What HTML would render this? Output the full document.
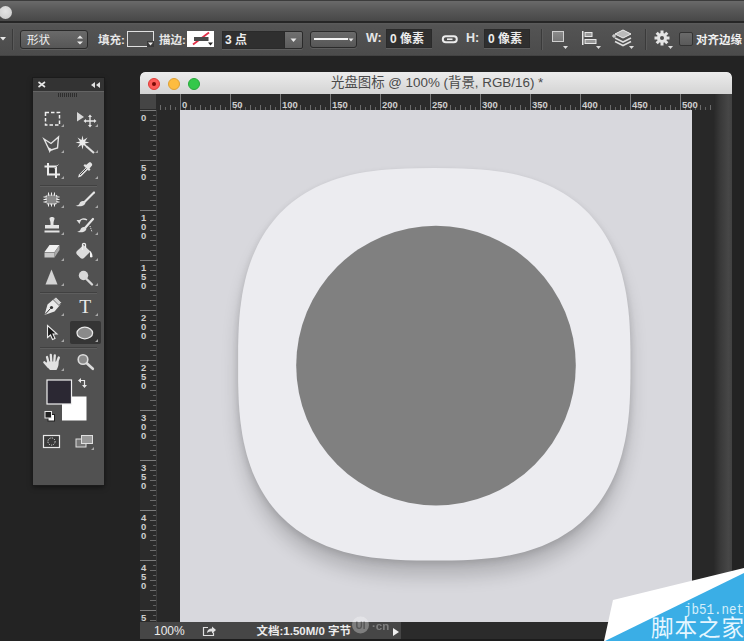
<!DOCTYPE html>
<html><head><meta charset="utf-8"><title>光盘图标</title>
<style>
html,body{margin:0;padding:0;}
body{width:744px;height:641px;overflow:hidden;background:#232323;position:relative;font-family:"Liberation Sans","Noto Sans CJK SC",sans-serif;}
.abs{position:absolute;}
#titlebar{left:0;top:0;width:744px;height:23px;background:linear-gradient(#3c3c3c 0,#3c3c3c 1px,#6a6a6a 1px,#5a5a5a 9px,#484848 21px,#262626 21px);}
#tb-dot{left:-1px;top:6px;width:13px;height:13px;border-radius:50%;background:radial-gradient(circle at 50% 40%,#e4e4e4,#c8c8c8);}
#optbar{left:0;top:23px;width:744px;height:33px;background:linear-gradient(#5c5c5c 0,#545454 2px,#4b4b4b 32px,#3a3a3a 33px);}
.lbl{color:#e6e6e6;font-size:11.5px;font-weight:bold;line-height:14px;white-space:nowrap;}
.inp{background:#2f2f2f;border:1px solid #2a2a2a;box-shadow:0 1px 0 #5e5e5e;box-sizing:border-box;color:#ececec;font-size:12px;font-weight:bold;line-height:19px;white-space:nowrap;}
.btn{background:linear-gradient(#6a6a6a,#565656);border:1px solid #2a2a2a;border-radius:3px;box-shadow:0 1px 0 #5e5e5e;box-sizing:border-box;}
.vsep{width:1px;background:#3a3a3a;box-shadow:1px 0 0 #5a5a5a;}
#panel{left:33px;top:78px;width:71px;height:407px;background:#515151;box-shadow:0 0 0 1px #1b1b1b,0 2px 5px rgba(0,0,0,.5);}
#panel-h{left:0;top:0;width:71px;height:13px;background:#333;border-bottom:1px solid #646464;box-sizing:content-box;}
.hsep{left:7px;width:57px;height:1px;background:#434343;box-shadow:0 1px 0 #5d5d5d;}
#win{left:140px;top:72px;width:592px;height:569px;background:#282828;border-radius:5px 5px 0 0;overflow:hidden;}
#wtitle{left:0;top:0;width:592px;height:22px;background:linear-gradient(#ececec,#d4d4d4);border-radius:5px 5px 0 0;}
#wtitle span{position:absolute;left:191px;top:3px;font-size:13.4px;line-height:16px;color:#4a4a4a;white-space:nowrap;}
.tl{width:12px;height:12px;border-radius:50%;top:6px;box-sizing:border-box;}
</style></head><body>
<!-- app title bar -->
<div id="titlebar" class="abs"></div>
<div id="tb-dot" class="abs"></div>
<!-- options bar -->
<div id="optbar" class="abs"></div>
<div class="abs vsep" style="left:12px;top:29px;height:21px"></div>
<svg class="abs" style="left:0;top:36px" width="8" height="6"><path d="M0 1h6l-3 3.5z" fill="#e8e8e8"/></svg>
<div class="abs btn" style="left:20px;top:30px;width:68px;height:19px"></div>
<div class="abs lbl" style="left:27px;top:32.5px;font-weight:normal;color:#f0f0f0">形状</div>
<svg class="abs" style="left:76px;top:34px" width="8" height="12"><path d="M1 4.5l3-3 3 3zM1 7.5l3 3 3-3z" fill="#e8e8e8"/></svg>
<div class="abs lbl" style="left:98px;top:33px">填充:</div>
<div class="abs" style="left:127px;top:31px;width:27px;height:16px;box-sizing:border-box;border:1px solid #e0e0e0;background:#555"></div>
<svg class="abs" style="left:147px;top:41px" width="7" height="6"><rect width="7" height="6" fill="#3a3a3a"/><path d="M1 1.500h5l-2.500 3z" fill="#eee"/></svg>
<div class="abs lbl" style="left:159px;top:33px">描边:</div>
<div class="abs" style="left:187px;top:31px;width:27px;height:16px;box-sizing:border-box;background:#fff;overflow:hidden"><svg width="27" height="16"><path d="M6 13.500L22 1.500" stroke="#e03048" stroke-width="1.800"/><rect x="7" y="6" width="14.500" height="4" fill="#4a4a4a"/><path d="M21 11.500h5l-2.500 3z" fill="#222"/></svg></div>
<div class="abs inp" style="left:222px;top:31px;width:63px;height:18px;line-height:17px;padding-left:2px">3 点</div>
<div class="abs btn" style="left:284px;top:31px;width:19px;height:18px;border-radius:0 2px 2px 0;background:linear-gradient(#707070,#5c5c5c)"></div>
<svg class="abs" style="left:290px;top:38px" width="8" height="6"><path d="M0.5 0.5h6l-3 3.5z" fill="#e8e8e8"/></svg>
<div class="abs btn" style="left:310px;top:31px;width:47px;height:17px"></div>
<div class="abs" style="left:314px;top:38px;width:34px;height:2px;background:#f4f4f4"></div>
<svg class="abs" style="left:348px;top:38px" width="8" height="6"><path d="M0.5 0.5h5l-2.5 3z" fill="#e8e8e8"/></svg>
<div class="abs lbl" style="left:366px;top:31px;font-size:12.5px">W:</div>
<div class="abs inp" style="left:386px;top:29px;width:46px;height:19px;padding-left:3px">0 像素</div>
<svg class="abs" style="left:441px;top:34px" width="18" height="11"><rect x="1.800" y="2.200" width="14" height="6" rx="3" fill="none" stroke="#ececec" stroke-width="2"/><rect x="6" y="4.400" width="5.500" height="1.600" fill="#ececec"/></svg>
<div class="abs lbl" style="left:466px;top:31px;font-size:12.5px">H:</div>
<div class="abs inp" style="left:484px;top:29px;width:46px;height:19px;padding-left:3px">0 像素</div>
<div class="abs vsep" style="left:541px;top:29px;height:21px"></div>
<div class="abs" style="left:552px;top:31px;width:12px;height:11px;background:linear-gradient(#8a8a8a,#777);border:1px solid #cfcfcf;box-sizing:border-box"></div>
<svg class="abs" style="left:563px;top:46px" width="5" height="4"><path d="M0 0h5l-2.5 3z" fill="#ddd"/></svg>
<svg class="abs" style="left:582px;top:31px" width="17" height="15"><rect x="0" y="0" width="1.5" height="14" fill="#e8e8e8"/><rect x="3" y="1.5" width="7" height="4" fill="#999" stroke="#e8e8e8"/><rect x="3" y="8.5" width="11" height="4" fill="#999" stroke="#e8e8e8"/></svg>
<svg class="abs" style="left:596px;top:46px" width="5" height="4"><path d="M0 0h5l-2.5 3z" fill="#ddd"/></svg>
<svg class="abs" style="left:612px;top:29px" width="22" height="18"><path d="M11 1l8 4-8 4-8-4z" fill="#bbb" stroke="#eee" stroke-width="1"/><path d="M3 9l8 4 8-4" fill="none" stroke="#ddd" stroke-width="1.6"/><path d="M3 12.5l8 4 8-4" fill="none" stroke="#ddd" stroke-width="1.6"/><path d="M0 7h4M2 5v4" stroke="#eee" stroke-width="1"/></svg>
<svg class="abs" style="left:629px;top:46px" width="5" height="4"><path d="M0 0h5l-2.5 3z" fill="#ddd"/></svg>
<div class="abs vsep" style="left:645px;top:29px;height:21px"></div>
<svg class="abs" style="left:654px;top:30px" width="16" height="16" viewBox="-8 -8 16 16"><g fill="#e4e4e4"><circle r="5"/><g id="t"><rect x="-1.5" y="-7.5" width="3" height="15"/></g><use href="#t" transform="rotate(45)"/><use href="#t" transform="rotate(90)"/><use href="#t" transform="rotate(135)"/></g><circle r="2" fill="#4f4f4f"/></svg>
<svg class="abs" style="left:668px;top:46px" width="5" height="4"><path d="M0 0h5l-2.5 3z" fill="#ddd"/></svg>
<div class="abs" style="left:679px;top:32px;width:14px;height:14px;box-sizing:border-box;background:linear-gradient(#6a6a6a,#5a5a5a);border:1px solid #333;border-radius:2px"></div>
<div class="abs lbl" style="left:696px;top:32.5px;color:#f0f0f0">对齐边缘</div>

<!-- tool panel -->
<div id="panel" class="abs">
<div id="panel-h" class="abs"></div>
</div>

<!-- document window -->
<div id="win" class="abs">
<div id="wtitle" class="abs"><span>光盘图标 @ 100% (背景, RGB/16) *</span></div>
<div class="abs tl" style="left:8px;background:#fc5b57;border:1px solid #de3d38"></div>
<div class="abs" style="left:12px;top:10px;width:4px;height:4px;border-radius:50%;background:#7a0a05"></div>
<div class="abs tl" style="left:28px;background:#fdbc40;border:1px solid #dea034"></div>
<div class="abs tl" style="left:48px;background:#34c84a;border:1px solid #27a83a"></div>
</div>
<svg class="abs" style="left:0;top:0" width="744" height="641" font-family="'Liberation Sans',sans-serif">
<defs>
<clipPath id="cv"><rect x="180" y="110" width="512" height="512"/></clipPath>
<filter id="sh" x="-20%" y="-20%" width="140%" height="150%"><feGaussianBlur stdDeviation="9"/></filter><filter id="sh2" x="-10%" y="-10%" width="120%" height="120%"><feGaussianBlur stdDeviation="3.500"/></filter>
</defs>
<!-- panel header icons -->
<g stroke="#e6e6e6" stroke-width="1.6" fill="none"><path d="M38.500 82l6.500 5M45 82l-6.500 5"/></g>
<path d="M95 82v6l-4-3zM100 82v6l-4-3z" fill="#e0e0e0"/>
<!-- grip -->
<g fill="#2e2e2e"><rect x="58" y="93" width="1" height="4"/><rect x="60" y="93" width="1" height="4"/><rect x="62" y="93" width="1" height="4"/><rect x="64" y="93" width="1" height="4"/><rect x="66" y="93" width="1" height="4"/><rect x="68" y="93" width="1" height="4"/><rect x="70" y="93" width="1" height="4"/><rect x="72" y="93" width="1" height="4"/><rect x="74" y="93" width="1" height="4"/><rect x="76" y="93" width="1" height="4"/></g>
<!-- separators -->
<g><rect x="40" y="185" width="57" height="1" fill="#414141"/><rect x="40" y="186" width="57" height="1" fill="#5e5e5e"/>
<rect x="40" y="292" width="57" height="1" fill="#414141"/><rect x="40" y="293" width="57" height="1" fill="#5e5e5e"/>
<rect x="40" y="347" width="57" height="1" fill="#414141"/><rect x="40" y="348" width="57" height="1" fill="#5e5e5e"/></g>
<!-- selected cell -->
<rect x="70" y="321" width="31" height="23" rx="2" fill="#353535"/>
<!-- corner triangles -->
<g fill="#a8a8a8">
<path d="M61 127h3v-3zM95 127h3v-3zM61 153h3v-3zM95 153h3v-3zM61 179h3v-3zM95 179h3v-3zM61 208h3v-3zM95 208h3v-3zM61 235h3v-3zM95 235h3v-3zM61 261h3v-3zM95 261h3v-3zM61 286h3v-3zM95 286h3v-3zM61 316h3v-3zM95 316h3v-3zM61 342h3v-3zM95 342h3v-3zM61 371h3v-3zM91 450h3v-3z"/></g>
<!-- marquee -->
<rect x="45.500" y="112.500" width="14" height="12.500" fill="none" stroke="#f0f0f0" stroke-width="1.500" stroke-dasharray="3.500 2"/>
<!-- move -->
<path d="M77 112v9.500l7-4.500z" fill="#d8d8d8"/><path d="M90 116v10M85 121h10" stroke="#e8e8e8" stroke-width="1.300"/><path d="M90 114.500l2 2.500h-4zM90 127.500l2-2.500h-4zM83.500 121l2.500-2v4zM96.500 121l-2.500-2v4z" fill="#e8e8e8"/>
<!-- poly lasso -->
<path d="M44 139l7 4.500 7.500-6.500-1 11-8 2.500z" fill="none" stroke="#e4e4e4" stroke-width="1.400"/><path d="M48 147l1.500 6 1.500-2.500 2.500-.5z" fill="#e4e4e4"/>
<!-- magic wand -->
<path d="M86 146l8 7" stroke="#e0e0e0" stroke-width="2.200"/><path d="M82.500 135.500l1 4.500 4-2.500-2.500 4 4.500 1-4.500 1 2.500 4-4-2.500-1 4.500-1-4.500-4 2.500 2.500-4-4.500-1 4.500-1-2.500-4 4 2.500z" fill="#ececec"/>
<!-- crop -->
<path d="M48 163v11.500h12M44.500 166.500h11.500v11.500" fill="none" stroke="#ececec" stroke-width="2"/><path d="M50 173l8.500-8.500" stroke="#bbb" stroke-width="1"/><rect x="49.500" y="168" width="5" height="5" fill="#3a3a3a"/>
<!-- eyedropper -->
<path d="M78 177.500l1-3 8-8 2 2-8 8z" fill="#e4e4e4"/><path d="M86 165l3-2.500c1.500-1 4 1.500 3 3l-2.500 3 1 1-1.500 1.500-5.500-5.500 1.500-1.500z" fill="#e4e4e4"/><path d="M80 175l6.500-6.500" stroke="#444" stroke-width="1"/>
<!-- healing brush -->
<rect x="46" y="195" width="11" height="9" rx="2" fill="#8a8a8a" stroke="#eee" stroke-width="1.200" stroke-dasharray="1.500 1.200"/><path d="M48.500 192.500v3M51.500 192.500v3M54.500 192.500v3M48.500 203.500v3M51.500 203.500v3M54.500 203.500v3M43.500 197h3M43.500 199.500h3M43.500 202h3M56.500 197h3M56.500 199.500h3M56.500 202h3" stroke="#eee" stroke-width="1"/>
<!-- brush -->
<path d="M94 192.500l-10 10" stroke="#e6e6e6" stroke-width="2.200" stroke-linecap="round"/><path d="M84.500 201.500c-2-1-4.500 0-5 2-.500 1.500-2 2-4 2 3 1.500 8 1 9.500-1.500.700-1.200.300-2-.500-2.500z" fill="#e0e0e0"/>
<!-- stamp -->
<path d="M49.500 218.500c0-2 5-2 5 0 0 1.500-1 2.500-1 4.500v2h5.500v3.500h-14v-3.500h5.500v-2c0-2-1-3-1-4.500z" fill="#e4e4e4"/><rect x="44.500" y="230.500" width="15" height="2" fill="#e4e4e4"/>
<!-- history brush -->
<path d="M93 219l-8 9" stroke="#e6e6e6" stroke-width="2.200" stroke-linecap="round"/><path d="M85.500 227.500c-2-1-4.500 0-5 2-.500 1.500-2 2-3.500 2 3 1.500 7.500 1 9-1.500.700-1.200.300-2-.500-2.500z" fill="#e0e0e0"/><path d="M79 222c1-3 5-4 8-2" fill="none" stroke="#e0e0e0" stroke-width="1.400"/><path d="M76.500 220l4.500 0-1.500 4z" fill="#e0e0e0"/><path d="M90 226l2 6" stroke="#eee" stroke-width="1" stroke-dasharray="1 1"/>
<!-- eraser -->
<path d="M44.500 252l5-7h10l-5 7z" fill="#f0f0f0"/><path d="M44.500 252.500h10v5h-10z" fill="#c8c8c8"/><path d="M54.500 252.500l5-7.500v5l-5 7.500z" fill="#a8a8a8"/>
<!-- bucket -->
<path d="M77 251l6.500-6 7 6.500-6.500 6.500c-1 1-2.500 1-3.500 0l-3.500-3.500c-1-1-1-2.500 0-3.500z" fill="#dcdcdc"/><path d="M82.500 250v-5.500c0-1.500 3-1.500 3 0v4" fill="none" stroke="#eee" stroke-width="1.300"/><path d="M90 251c1.500 1 2.500 3 2.500 6-1 .500-2 .500-2.500 0z" fill="#f4f4f4"/>
<!-- sharpen -->
<path d="M51.500 269.500l6 15h-12z" fill="#d4d4d4"/>
<!-- dodge -->
<circle cx="83.500" cy="275.500" r="4.700" fill="#d8d8d8"/><path d="M86.500 279l5.500 5.500" stroke="#d8d8d8" stroke-width="2.400" stroke-linecap="round"/>
<!-- pen -->
<path d="M44.500 315l3-10.500 7-6 6 6-6 7z" fill="#e8e8e8"/><path d="M53 299.500l3-2.500 5.500 5.500-2.500 3z" fill="#cfcfcf" stroke="#555" stroke-width=".800"/><circle cx="51.500" cy="307.500" r="1.600" fill="#333"/><path d="M45 314.500l5.500-6" stroke="#333" stroke-width="1"/>
<!-- T -->
<text x="85.200" y="313" font-family="'Liberation Serif',serif" font-size="19.500" fill="#e8e8e8" text-anchor="middle">T</text>
<!-- path select arrow -->
<path d="M47.500 325.500v12l3-2.500 2 4.500 2.500-1-2-4.500h4z" fill="#1a1a1a" stroke="#e8e8e8" stroke-width="1.100"/>
<!-- ellipse tool -->
<ellipse cx="84.800" cy="333" rx="7.800" ry="5.800" fill="#8a8a8a" stroke="#e8e8e8" stroke-width="1.300"/>
<!-- hand -->
<g stroke="#e2e2e2" stroke-width="2.300" stroke-linecap="round" fill="none"><path d="M48.500 362.500L47 357M51.300 361.500L50.800 355M54.300 361.500L54.800 355.300M57 362.500L58.800 357.500M48.500 367L44.300 362.300"/></g><path d="M47 361.500h11.500c.500 3-.500 6-2 8.500h-6.500c-1.500-1.500-3-4-4.500-6z" fill="#e2e2e2"/>
<!-- zoom -->
<circle cx="83" cy="359.500" r="4.800" fill="#8a8a8a" stroke="#dcdcdc" stroke-width="1.600"/><path d="M86.800 363.300l6 5.500" stroke="#dcdcdc" stroke-width="2.600" stroke-linecap="round"/>
<!-- colour swatches -->
<rect x="62" y="396.500" width="24.500" height="24" fill="#fff"/>
<rect x="47" y="380" width="24.500" height="24" fill="#2b2833" stroke="#f0f0f0" stroke-width="1.200"/>
<path d="M80 380.500h4.500v5" fill="none" stroke="#e8e8e8" stroke-width="1.200"/><path d="M78 380.500l3-2.500v5zM84.500 388l-2.500-3h5z" fill="#e8e8e8"/>
<rect x="48" y="414.500" width="6.500" height="6.500" fill="#fff" stroke="#222" stroke-width="1"/><rect x="45" y="411.500" width="6.500" height="6.500" fill="#222" stroke="#e8e8e8" stroke-width="1"/>
<!-- quick mask -->
<rect x="43.500" y="435.500" width="16" height="12" fill="#3a3a3a" stroke="#e8e8e8" stroke-width="1.200"/><circle cx="51.500" cy="441.500" r="3.600" fill="none" stroke="#e8e8e8" stroke-width="1" stroke-dasharray="1.200 1.200"/>
<!-- screen mode -->
<rect x="76" y="439" width="10" height="8" fill="#777" stroke="#e0e0e0" stroke-width="1"/><rect x="81.500" y="435.500" width="11" height="8" fill="#999" stroke="#e0e0e0" stroke-width="1"/>
<!-- rulers -->
<rect x="140" y="94" width="592" height="16" fill="#2b2b2b"/>
<rect x="140" y="110" width="16" height="512" fill="#2b2b2b"/>
<rect x="156" y="110" width="1" height="512" fill="#3c3c3c"/>
<rect x="140" y="94" width="16" height="15" fill="#454545"/>
<rect x="160" y="105" width="1" height="5" fill="#6c6c6c"/><rect x="165" y="107" width="1" height="3" fill="#626262"/><rect x="170" y="105" width="1" height="5" fill="#6c6c6c"/><rect x="175" y="107" width="1" height="3" fill="#626262"/><rect x="180" y="94" width="1" height="16" fill="#7c7c7c"/><rect x="185" y="107" width="1" height="3" fill="#626262"/><rect x="190" y="105" width="1" height="5" fill="#6c6c6c"/><rect x="195" y="107" width="1" height="3" fill="#626262"/><rect x="200" y="105" width="1" height="5" fill="#6c6c6c"/><rect x="205" y="107" width="1" height="3" fill="#626262"/><rect x="210" y="105" width="1" height="5" fill="#6c6c6c"/><rect x="215" y="107" width="1" height="3" fill="#626262"/><rect x="220" y="105" width="1" height="5" fill="#6c6c6c"/><rect x="225" y="107" width="1" height="3" fill="#626262"/><rect x="230" y="94" width="1" height="16" fill="#7c7c7c"/><rect x="235" y="107" width="1" height="3" fill="#626262"/><rect x="240" y="105" width="1" height="5" fill="#6c6c6c"/><rect x="245" y="107" width="1" height="3" fill="#626262"/><rect x="250" y="105" width="1" height="5" fill="#6c6c6c"/><rect x="255" y="107" width="1" height="3" fill="#626262"/><rect x="260" y="105" width="1" height="5" fill="#6c6c6c"/><rect x="265" y="107" width="1" height="3" fill="#626262"/><rect x="270" y="105" width="1" height="5" fill="#6c6c6c"/><rect x="275" y="107" width="1" height="3" fill="#626262"/><rect x="280" y="94" width="1" height="16" fill="#7c7c7c"/><rect x="285" y="107" width="1" height="3" fill="#626262"/><rect x="290" y="105" width="1" height="5" fill="#6c6c6c"/><rect x="295" y="107" width="1" height="3" fill="#626262"/><rect x="300" y="105" width="1" height="5" fill="#6c6c6c"/><rect x="305" y="107" width="1" height="3" fill="#626262"/><rect x="310" y="105" width="1" height="5" fill="#6c6c6c"/><rect x="315" y="107" width="1" height="3" fill="#626262"/><rect x="320" y="105" width="1" height="5" fill="#6c6c6c"/><rect x="325" y="107" width="1" height="3" fill="#626262"/><rect x="330" y="94" width="1" height="16" fill="#7c7c7c"/><rect x="335" y="107" width="1" height="3" fill="#626262"/><rect x="340" y="105" width="1" height="5" fill="#6c6c6c"/><rect x="345" y="107" width="1" height="3" fill="#626262"/><rect x="350" y="105" width="1" height="5" fill="#6c6c6c"/><rect x="355" y="107" width="1" height="3" fill="#626262"/><rect x="360" y="105" width="1" height="5" fill="#6c6c6c"/><rect x="365" y="107" width="1" height="3" fill="#626262"/><rect x="370" y="105" width="1" height="5" fill="#6c6c6c"/><rect x="375" y="107" width="1" height="3" fill="#626262"/><rect x="380" y="94" width="1" height="16" fill="#7c7c7c"/><rect x="385" y="107" width="1" height="3" fill="#626262"/><rect x="390" y="105" width="1" height="5" fill="#6c6c6c"/><rect x="395" y="107" width="1" height="3" fill="#626262"/><rect x="400" y="105" width="1" height="5" fill="#6c6c6c"/><rect x="405" y="107" width="1" height="3" fill="#626262"/><rect x="410" y="105" width="1" height="5" fill="#6c6c6c"/><rect x="415" y="107" width="1" height="3" fill="#626262"/><rect x="420" y="105" width="1" height="5" fill="#6c6c6c"/><rect x="425" y="107" width="1" height="3" fill="#626262"/><rect x="430" y="94" width="1" height="16" fill="#7c7c7c"/><rect x="435" y="107" width="1" height="3" fill="#626262"/><rect x="440" y="105" width="1" height="5" fill="#6c6c6c"/><rect x="445" y="107" width="1" height="3" fill="#626262"/><rect x="450" y="105" width="1" height="5" fill="#6c6c6c"/><rect x="455" y="107" width="1" height="3" fill="#626262"/><rect x="460" y="105" width="1" height="5" fill="#6c6c6c"/><rect x="465" y="107" width="1" height="3" fill="#626262"/><rect x="470" y="105" width="1" height="5" fill="#6c6c6c"/><rect x="475" y="107" width="1" height="3" fill="#626262"/><rect x="480" y="94" width="1" height="16" fill="#7c7c7c"/><rect x="485" y="107" width="1" height="3" fill="#626262"/><rect x="490" y="105" width="1" height="5" fill="#6c6c6c"/><rect x="495" y="107" width="1" height="3" fill="#626262"/><rect x="500" y="105" width="1" height="5" fill="#6c6c6c"/><rect x="505" y="107" width="1" height="3" fill="#626262"/><rect x="510" y="105" width="1" height="5" fill="#6c6c6c"/><rect x="515" y="107" width="1" height="3" fill="#626262"/><rect x="520" y="105" width="1" height="5" fill="#6c6c6c"/><rect x="525" y="107" width="1" height="3" fill="#626262"/><rect x="530" y="94" width="1" height="16" fill="#7c7c7c"/><rect x="535" y="107" width="1" height="3" fill="#626262"/><rect x="540" y="105" width="1" height="5" fill="#6c6c6c"/><rect x="545" y="107" width="1" height="3" fill="#626262"/><rect x="550" y="105" width="1" height="5" fill="#6c6c6c"/><rect x="555" y="107" width="1" height="3" fill="#626262"/><rect x="560" y="105" width="1" height="5" fill="#6c6c6c"/><rect x="565" y="107" width="1" height="3" fill="#626262"/><rect x="570" y="105" width="1" height="5" fill="#6c6c6c"/><rect x="575" y="107" width="1" height="3" fill="#626262"/><rect x="580" y="94" width="1" height="16" fill="#7c7c7c"/><rect x="585" y="107" width="1" height="3" fill="#626262"/><rect x="590" y="105" width="1" height="5" fill="#6c6c6c"/><rect x="595" y="107" width="1" height="3" fill="#626262"/><rect x="600" y="105" width="1" height="5" fill="#6c6c6c"/><rect x="605" y="107" width="1" height="3" fill="#626262"/><rect x="610" y="105" width="1" height="5" fill="#6c6c6c"/><rect x="615" y="107" width="1" height="3" fill="#626262"/><rect x="620" y="105" width="1" height="5" fill="#6c6c6c"/><rect x="625" y="107" width="1" height="3" fill="#626262"/><rect x="630" y="94" width="1" height="16" fill="#7c7c7c"/><rect x="635" y="107" width="1" height="3" fill="#626262"/><rect x="640" y="105" width="1" height="5" fill="#6c6c6c"/><rect x="645" y="107" width="1" height="3" fill="#626262"/><rect x="650" y="105" width="1" height="5" fill="#6c6c6c"/><rect x="655" y="107" width="1" height="3" fill="#626262"/><rect x="660" y="105" width="1" height="5" fill="#6c6c6c"/><rect x="665" y="107" width="1" height="3" fill="#626262"/><rect x="670" y="105" width="1" height="5" fill="#6c6c6c"/><rect x="675" y="107" width="1" height="3" fill="#626262"/><rect x="680" y="94" width="1" height="16" fill="#7c7c7c"/><rect x="685" y="107" width="1" height="3" fill="#626262"/><rect x="690" y="105" width="1" height="5" fill="#6c6c6c"/><rect x="695" y="107" width="1" height="3" fill="#626262"/><rect x="700" y="105" width="1" height="5" fill="#6c6c6c"/><rect x="705" y="107" width="1" height="3" fill="#626262"/><rect x="710" y="105" width="1" height="5" fill="#6c6c6c"/><rect x="715" y="107" width="1" height="3" fill="#626262"/>
<rect x="140" y="110" width="16" height="1" fill="#7c7c7c"/><rect x="153" y="115" width="3" height="1" fill="#626262"/><rect x="150" y="120" width="6" height="1" fill="#6c6c6c"/><rect x="153" y="125" width="3" height="1" fill="#626262"/><rect x="150" y="130" width="6" height="1" fill="#6c6c6c"/><rect x="153" y="135" width="3" height="1" fill="#626262"/><rect x="150" y="140" width="6" height="1" fill="#6c6c6c"/><rect x="153" y="145" width="3" height="1" fill="#626262"/><rect x="150" y="150" width="6" height="1" fill="#6c6c6c"/><rect x="153" y="155" width="3" height="1" fill="#626262"/><rect x="140" y="160" width="16" height="1" fill="#7c7c7c"/><rect x="153" y="165" width="3" height="1" fill="#626262"/><rect x="150" y="170" width="6" height="1" fill="#6c6c6c"/><rect x="153" y="175" width="3" height="1" fill="#626262"/><rect x="150" y="180" width="6" height="1" fill="#6c6c6c"/><rect x="153" y="185" width="3" height="1" fill="#626262"/><rect x="150" y="190" width="6" height="1" fill="#6c6c6c"/><rect x="153" y="195" width="3" height="1" fill="#626262"/><rect x="150" y="200" width="6" height="1" fill="#6c6c6c"/><rect x="153" y="205" width="3" height="1" fill="#626262"/><rect x="140" y="210" width="16" height="1" fill="#7c7c7c"/><rect x="153" y="215" width="3" height="1" fill="#626262"/><rect x="150" y="220" width="6" height="1" fill="#6c6c6c"/><rect x="153" y="225" width="3" height="1" fill="#626262"/><rect x="150" y="230" width="6" height="1" fill="#6c6c6c"/><rect x="153" y="235" width="3" height="1" fill="#626262"/><rect x="150" y="240" width="6" height="1" fill="#6c6c6c"/><rect x="153" y="245" width="3" height="1" fill="#626262"/><rect x="150" y="250" width="6" height="1" fill="#6c6c6c"/><rect x="153" y="255" width="3" height="1" fill="#626262"/><rect x="140" y="260" width="16" height="1" fill="#7c7c7c"/><rect x="153" y="265" width="3" height="1" fill="#626262"/><rect x="150" y="270" width="6" height="1" fill="#6c6c6c"/><rect x="153" y="275" width="3" height="1" fill="#626262"/><rect x="150" y="280" width="6" height="1" fill="#6c6c6c"/><rect x="153" y="285" width="3" height="1" fill="#626262"/><rect x="150" y="290" width="6" height="1" fill="#6c6c6c"/><rect x="153" y="295" width="3" height="1" fill="#626262"/><rect x="150" y="300" width="6" height="1" fill="#6c6c6c"/><rect x="153" y="305" width="3" height="1" fill="#626262"/><rect x="140" y="310" width="16" height="1" fill="#7c7c7c"/><rect x="153" y="315" width="3" height="1" fill="#626262"/><rect x="150" y="320" width="6" height="1" fill="#6c6c6c"/><rect x="153" y="325" width="3" height="1" fill="#626262"/><rect x="150" y="330" width="6" height="1" fill="#6c6c6c"/><rect x="153" y="335" width="3" height="1" fill="#626262"/><rect x="150" y="340" width="6" height="1" fill="#6c6c6c"/><rect x="153" y="345" width="3" height="1" fill="#626262"/><rect x="150" y="350" width="6" height="1" fill="#6c6c6c"/><rect x="153" y="355" width="3" height="1" fill="#626262"/><rect x="140" y="360" width="16" height="1" fill="#7c7c7c"/><rect x="153" y="365" width="3" height="1" fill="#626262"/><rect x="150" y="370" width="6" height="1" fill="#6c6c6c"/><rect x="153" y="375" width="3" height="1" fill="#626262"/><rect x="150" y="380" width="6" height="1" fill="#6c6c6c"/><rect x="153" y="385" width="3" height="1" fill="#626262"/><rect x="150" y="390" width="6" height="1" fill="#6c6c6c"/><rect x="153" y="395" width="3" height="1" fill="#626262"/><rect x="150" y="400" width="6" height="1" fill="#6c6c6c"/><rect x="153" y="405" width="3" height="1" fill="#626262"/><rect x="140" y="410" width="16" height="1" fill="#7c7c7c"/><rect x="153" y="415" width="3" height="1" fill="#626262"/><rect x="150" y="420" width="6" height="1" fill="#6c6c6c"/><rect x="153" y="425" width="3" height="1" fill="#626262"/><rect x="150" y="430" width="6" height="1" fill="#6c6c6c"/><rect x="153" y="435" width="3" height="1" fill="#626262"/><rect x="150" y="440" width="6" height="1" fill="#6c6c6c"/><rect x="153" y="445" width="3" height="1" fill="#626262"/><rect x="150" y="450" width="6" height="1" fill="#6c6c6c"/><rect x="153" y="455" width="3" height="1" fill="#626262"/><rect x="140" y="460" width="16" height="1" fill="#7c7c7c"/><rect x="153" y="465" width="3" height="1" fill="#626262"/><rect x="150" y="470" width="6" height="1" fill="#6c6c6c"/><rect x="153" y="475" width="3" height="1" fill="#626262"/><rect x="150" y="480" width="6" height="1" fill="#6c6c6c"/><rect x="153" y="485" width="3" height="1" fill="#626262"/><rect x="150" y="490" width="6" height="1" fill="#6c6c6c"/><rect x="153" y="495" width="3" height="1" fill="#626262"/><rect x="150" y="500" width="6" height="1" fill="#6c6c6c"/><rect x="153" y="505" width="3" height="1" fill="#626262"/><rect x="140" y="510" width="16" height="1" fill="#7c7c7c"/><rect x="153" y="515" width="3" height="1" fill="#626262"/><rect x="150" y="520" width="6" height="1" fill="#6c6c6c"/><rect x="153" y="525" width="3" height="1" fill="#626262"/><rect x="150" y="530" width="6" height="1" fill="#6c6c6c"/><rect x="153" y="535" width="3" height="1" fill="#626262"/><rect x="150" y="540" width="6" height="1" fill="#6c6c6c"/><rect x="153" y="545" width="3" height="1" fill="#626262"/><rect x="150" y="550" width="6" height="1" fill="#6c6c6c"/><rect x="153" y="555" width="3" height="1" fill="#626262"/><rect x="140" y="560" width="16" height="1" fill="#7c7c7c"/><rect x="153" y="565" width="3" height="1" fill="#626262"/><rect x="150" y="570" width="6" height="1" fill="#6c6c6c"/><rect x="153" y="575" width="3" height="1" fill="#626262"/><rect x="150" y="580" width="6" height="1" fill="#6c6c6c"/><rect x="153" y="585" width="3" height="1" fill="#626262"/><rect x="150" y="590" width="6" height="1" fill="#6c6c6c"/><rect x="153" y="595" width="3" height="1" fill="#626262"/><rect x="150" y="600" width="6" height="1" fill="#6c6c6c"/><rect x="153" y="605" width="3" height="1" fill="#626262"/><rect x="140" y="610" width="16" height="1" fill="#7c7c7c"/><rect x="153" y="615" width="3" height="1" fill="#626262"/><rect x="150" y="620" width="6" height="1" fill="#6c6c6c"/>
<g font-size="9.5" font-weight="bold" fill="#cfcfcf"><text x="182" y="107.5">0</text><text x="232" y="107.5">50</text><text x="282" y="107.5">100</text><text x="332" y="107.5">150</text><text x="382" y="107.5">200</text><text x="432" y="107.5">250</text><text x="482" y="107.5">300</text><text x="532" y="107.5">350</text><text x="582" y="107.5">400</text><text x="632" y="107.5">450</text><text x="682" y="107.5">500</text><text x="141" y="121">0</text><text x="141" y="171">5</text><text x="141" y="180">0</text><text x="141" y="221">1</text><text x="141" y="230">0</text><text x="141" y="239">0</text><text x="141" y="271">1</text><text x="141" y="280">5</text><text x="141" y="289">0</text><text x="141" y="321">2</text><text x="141" y="330">0</text><text x="141" y="339">0</text><text x="141" y="371">2</text><text x="141" y="380">5</text><text x="141" y="389">0</text><text x="141" y="421">3</text><text x="141" y="430">0</text><text x="141" y="439">0</text><text x="141" y="471">3</text><text x="141" y="480">5</text><text x="141" y="489">0</text><text x="141" y="521">4</text><text x="141" y="530">0</text><text x="141" y="539">0</text><text x="141" y="571">4</text><text x="141" y="580">5</text><text x="141" y="589">0</text><text x="141" y="621">5</text></g>
<!-- scrollbar -->
<rect x="714" y="94" width="18" height="528" fill="url(#sbg)"/>
<linearGradient id="sbg" x1="0" x2="1" y1="0" y2="0"><stop offset="0" stop-color="#292929"/><stop offset=".35" stop-color="#393939"/><stop offset=".8" stop-color="#474747"/><stop offset="1" stop-color="#414141"/></linearGradient>
<!-- canvas -->
<rect x="180" y="110" width="512" height="512" fill="#d8d8dd"/>
<g clip-path="url(#cv)">
<path d="M630.5 364.3 L630.4 381.5 L630.1 392.8 L629.7 402.5 L629.1 411.3 L628.3 419.5 L627.3 427.2 L626.2 434.5 L624.9 441.4 L623.4 448.1 L621.8 454.5 L620.0 460.6 L618.0 466.5 L615.9 472.2 L613.5 477.7 L611.0 483.0 L608.4 488.1 L605.5 493.1 L602.5 497.8 L599.3 502.4 L596.0 506.7 L592.5 510.9 L588.8 515.0 L584.9 518.8 L580.9 522.5 L576.7 526.0 L572.3 529.4 L567.7 532.6 L563.0 535.6 L558.1 538.4 L553.0 541.1 L547.7 543.6 L542.2 545.9 L536.5 548.1 L530.6 550.0 L524.4 551.9 L518.0 553.5 L511.4 555.0 L504.4 556.3 L497.1 557.4 L489.4 558.3 L481.2 559.1 L472.4 559.7 L462.7 560.2 L451.5 560.4 L434.3 560.5 L417.0 560.4 L405.8 560.2 L396.1 559.7 L387.3 559.1 L379.1 558.3 L371.4 557.4 L364.1 556.3 L357.1 555.0 L350.5 553.5 L344.1 551.9 L337.9 550.0 L332.0 548.1 L326.3 545.9 L320.8 543.6 L315.5 541.1 L310.4 538.4 L305.5 535.6 L300.8 532.6 L296.2 529.4 L291.8 526.0 L287.6 522.5 L283.6 518.8 L279.7 515.0 L276.0 510.9 L272.5 506.7 L269.2 502.4 L266.0 497.8 L263.0 493.1 L260.1 488.1 L257.5 483.0 L255.0 477.7 L252.6 472.2 L250.5 466.5 L248.5 460.6 L246.7 454.5 L245.1 448.1 L243.6 441.4 L242.3 434.5 L241.2 427.2 L240.2 419.5 L239.4 411.3 L238.8 402.5 L238.4 392.8 L238.1 381.5 L238.1 364.3 L238.1 347.1 L238.4 335.8 L238.8 326.1 L239.4 317.3 L240.2 309.1 L241.2 301.4 L242.3 294.1 L243.6 287.2 L245.1 280.5 L246.7 274.1 L248.5 268.0 L250.5 262.1 L252.6 256.4 L255.0 250.9 L257.5 245.6 L260.1 240.5 L263.0 235.5 L266.0 230.8 L269.2 226.2 L272.5 221.9 L276.0 217.7 L279.7 213.6 L283.6 209.8 L287.6 206.1 L291.8 202.6 L296.2 199.2 L300.8 196.0 L305.5 193.0 L310.4 190.2 L315.5 187.5 L320.8 185.0 L326.3 182.7 L332.0 180.5 L337.9 178.6 L344.1 176.7 L350.5 175.1 L357.1 173.6 L364.1 172.3 L371.4 171.2 L379.1 170.3 L387.3 169.5 L396.1 168.9 L405.8 168.4 L417.0 168.2 L434.2 168.1 L451.5 168.2 L462.7 168.4 L472.4 168.9 L481.2 169.5 L489.4 170.3 L497.1 171.2 L504.4 172.3 L511.4 173.6 L518.0 175.1 L524.4 176.7 L530.6 178.6 L536.5 180.5 L542.2 182.7 L547.7 185.0 L553.0 187.5 L558.1 190.2 L563.0 193.0 L567.7 196.0 L572.3 199.2 L576.7 202.6 L580.9 206.1 L584.9 209.8 L588.8 213.6 L592.5 217.7 L596.0 221.9 L599.3 226.2 L602.5 230.8 L605.5 235.5 L608.4 240.5 L611.0 245.6 L613.5 250.9 L615.9 256.4 L618.0 262.1 L620.0 268.0 L621.8 274.1 L623.4 280.5 L624.9 287.2 L626.2 294.1 L627.3 301.4 L628.3 309.1 L629.1 317.3 L629.7 326.1 L630.1 335.8 L630.4 347.1Z" fill="#000" opacity=".17" filter="url(#sh)" transform="translate(0 16)"/>
<path d="M630.5 364.3 L630.4 381.5 L630.1 392.8 L629.7 402.5 L629.1 411.3 L628.3 419.5 L627.3 427.2 L626.2 434.5 L624.9 441.4 L623.4 448.1 L621.8 454.5 L620.0 460.6 L618.0 466.5 L615.9 472.2 L613.5 477.7 L611.0 483.0 L608.4 488.1 L605.5 493.1 L602.5 497.8 L599.3 502.4 L596.0 506.7 L592.5 510.9 L588.8 515.0 L584.9 518.8 L580.9 522.5 L576.7 526.0 L572.3 529.4 L567.7 532.6 L563.0 535.6 L558.1 538.4 L553.0 541.1 L547.7 543.6 L542.2 545.9 L536.5 548.1 L530.6 550.0 L524.4 551.9 L518.0 553.5 L511.4 555.0 L504.4 556.3 L497.1 557.4 L489.4 558.3 L481.2 559.1 L472.4 559.7 L462.7 560.2 L451.5 560.4 L434.3 560.5 L417.0 560.4 L405.8 560.2 L396.1 559.7 L387.3 559.1 L379.1 558.3 L371.4 557.4 L364.1 556.3 L357.1 555.0 L350.5 553.5 L344.1 551.9 L337.9 550.0 L332.0 548.1 L326.3 545.9 L320.8 543.6 L315.5 541.1 L310.4 538.4 L305.5 535.6 L300.8 532.6 L296.2 529.4 L291.8 526.0 L287.6 522.5 L283.6 518.8 L279.7 515.0 L276.0 510.9 L272.5 506.7 L269.2 502.4 L266.0 497.8 L263.0 493.1 L260.1 488.1 L257.5 483.0 L255.0 477.7 L252.6 472.2 L250.5 466.5 L248.5 460.6 L246.7 454.5 L245.1 448.1 L243.6 441.4 L242.3 434.5 L241.2 427.2 L240.2 419.5 L239.4 411.3 L238.8 402.5 L238.4 392.8 L238.1 381.5 L238.1 364.3 L238.1 347.1 L238.4 335.8 L238.8 326.1 L239.4 317.3 L240.2 309.1 L241.2 301.4 L242.3 294.1 L243.6 287.2 L245.1 280.5 L246.7 274.1 L248.5 268.0 L250.5 262.1 L252.6 256.4 L255.0 250.9 L257.5 245.6 L260.1 240.5 L263.0 235.5 L266.0 230.8 L269.2 226.2 L272.5 221.9 L276.0 217.7 L279.7 213.6 L283.6 209.8 L287.6 206.1 L291.8 202.6 L296.2 199.2 L300.8 196.0 L305.5 193.0 L310.4 190.2 L315.5 187.5 L320.8 185.0 L326.3 182.7 L332.0 180.5 L337.9 178.6 L344.1 176.7 L350.5 175.1 L357.1 173.6 L364.1 172.3 L371.4 171.2 L379.1 170.3 L387.3 169.5 L396.1 168.9 L405.8 168.4 L417.0 168.2 L434.2 168.1 L451.5 168.2 L462.7 168.4 L472.4 168.9 L481.2 169.5 L489.4 170.3 L497.1 171.2 L504.4 172.3 L511.4 173.6 L518.0 175.1 L524.4 176.7 L530.6 178.6 L536.5 180.5 L542.2 182.7 L547.7 185.0 L553.0 187.5 L558.1 190.2 L563.0 193.0 L567.7 196.0 L572.3 199.2 L576.7 202.6 L580.9 206.1 L584.9 209.8 L588.8 213.6 L592.5 217.7 L596.0 221.9 L599.3 226.2 L602.5 230.8 L605.5 235.5 L608.4 240.5 L611.0 245.6 L613.5 250.9 L615.9 256.4 L618.0 262.1 L620.0 268.0 L621.8 274.1 L623.4 280.5 L624.9 287.2 L626.2 294.1 L627.3 301.4 L628.3 309.1 L629.1 317.3 L629.7 326.1 L630.1 335.8 L630.4 347.1Z" fill="#000" opacity=".13" filter="url(#sh2)" transform="translate(0 3)"/>
<path d="M630.5 364.3 L630.4 381.5 L630.1 392.8 L629.7 402.5 L629.1 411.3 L628.3 419.5 L627.3 427.2 L626.2 434.5 L624.9 441.4 L623.4 448.1 L621.8 454.5 L620.0 460.6 L618.0 466.5 L615.9 472.2 L613.5 477.7 L611.0 483.0 L608.4 488.1 L605.5 493.1 L602.5 497.8 L599.3 502.4 L596.0 506.7 L592.5 510.9 L588.8 515.0 L584.9 518.8 L580.9 522.5 L576.7 526.0 L572.3 529.4 L567.7 532.6 L563.0 535.6 L558.1 538.4 L553.0 541.1 L547.7 543.6 L542.2 545.9 L536.5 548.1 L530.6 550.0 L524.4 551.9 L518.0 553.5 L511.4 555.0 L504.4 556.3 L497.1 557.4 L489.4 558.3 L481.2 559.1 L472.4 559.7 L462.7 560.2 L451.5 560.4 L434.3 560.5 L417.0 560.4 L405.8 560.2 L396.1 559.7 L387.3 559.1 L379.1 558.3 L371.4 557.4 L364.1 556.3 L357.1 555.0 L350.5 553.5 L344.1 551.9 L337.9 550.0 L332.0 548.1 L326.3 545.9 L320.8 543.6 L315.5 541.1 L310.4 538.4 L305.5 535.6 L300.8 532.6 L296.2 529.4 L291.8 526.0 L287.6 522.5 L283.6 518.8 L279.7 515.0 L276.0 510.9 L272.5 506.7 L269.2 502.4 L266.0 497.8 L263.0 493.1 L260.1 488.1 L257.5 483.0 L255.0 477.7 L252.6 472.2 L250.5 466.5 L248.5 460.6 L246.7 454.5 L245.1 448.1 L243.6 441.4 L242.3 434.5 L241.2 427.2 L240.2 419.5 L239.4 411.3 L238.8 402.5 L238.4 392.8 L238.1 381.5 L238.1 364.3 L238.1 347.1 L238.4 335.8 L238.8 326.1 L239.4 317.3 L240.2 309.1 L241.2 301.4 L242.3 294.1 L243.6 287.2 L245.1 280.5 L246.7 274.1 L248.5 268.0 L250.5 262.1 L252.6 256.4 L255.0 250.9 L257.5 245.6 L260.1 240.5 L263.0 235.5 L266.0 230.8 L269.2 226.2 L272.5 221.9 L276.0 217.7 L279.7 213.6 L283.6 209.8 L287.6 206.1 L291.8 202.6 L296.2 199.2 L300.8 196.0 L305.5 193.0 L310.4 190.2 L315.5 187.5 L320.8 185.0 L326.3 182.7 L332.0 180.5 L337.9 178.6 L344.1 176.7 L350.5 175.1 L357.1 173.6 L364.1 172.3 L371.4 171.2 L379.1 170.3 L387.3 169.5 L396.1 168.9 L405.8 168.4 L417.0 168.2 L434.2 168.1 L451.5 168.2 L462.7 168.4 L472.4 168.9 L481.2 169.5 L489.4 170.3 L497.1 171.2 L504.4 172.3 L511.4 173.6 L518.0 175.1 L524.4 176.7 L530.6 178.6 L536.5 180.5 L542.2 182.7 L547.7 185.0 L553.0 187.5 L558.1 190.2 L563.0 193.0 L567.7 196.0 L572.3 199.2 L576.7 202.6 L580.9 206.1 L584.9 209.8 L588.8 213.6 L592.5 217.7 L596.0 221.9 L599.3 226.2 L602.5 230.8 L605.5 235.5 L608.4 240.5 L611.0 245.6 L613.5 250.9 L615.9 256.4 L618.0 262.1 L620.0 268.0 L621.8 274.1 L623.4 280.5 L624.9 287.2 L626.2 294.1 L627.3 301.4 L628.3 309.1 L629.1 317.3 L629.7 326.1 L630.1 335.8 L630.4 347.1Z" fill="#ececf0"/>
<circle cx="436" cy="365.6" r="139.8" fill="#808080"/>
</g>
<!-- status bar -->
<rect x="140" y="622" width="592" height="17" fill="#2b2b2b"/>
<rect x="140" y="622" width="261" height="17" fill="#464646"/>
<rect x="140" y="639" width="592" height="2" fill="#1c1c1c"/>
<g font-size="12" fill="#ececec"><text x="154" y="635">100%</text>
<text x="256.500" y="635" font-size="11.500" font-weight="bold" font-family="'Liberation Sans','Noto Sans CJK SC',sans-serif">文档:1.50M/0 字节</text></g>
<path d="M393 628l6 4-6 4z" fill="#eee"/>
<path d="M203 627.500h5M203.500 627v8.500h10v-3" fill="none" stroke="#e0e0e0" stroke-width="1.2"/><path d="M207 633c0-3 2-4.500 5-4.500v-2l4 3.500-4 3.500v-2c-2 0-3.500 0-5 1.500z" fill="#e0e0e0"/>
<!-- ui.cn mark -->
<g opacity=".3"><circle cx="360.500" cy="625" r="8.500" fill="#fff"/><text x="360.500" y="629" font-size="10" font-weight="bold" fill="#777" text-anchor="middle">UI</text><text x="372" y="630" font-size="11.500" font-weight="bold" fill="#fff">·cn</text></g>
<!-- watermark -->
<path d="M613 600L744 568V641H604z" fill="#fff"/>
<path d="M605 641L744 573V641z" fill="#3aaee6"/>
<text x="684" y="614" font-family="'Liberation Mono',monospace" font-size="14" fill="#d4eefb" textLength="60" lengthAdjust="spacingAndGlyphs">jb51.net</text>
<text x="651" y="636" font-family="'Liberation Sans','Noto Sans CJK SC','WenQuanYi Zen Hei',sans-serif" font-size="22.500" fill="#e6f6ff" textLength="93">脚本之家</text>
</svg>
</body></html>
